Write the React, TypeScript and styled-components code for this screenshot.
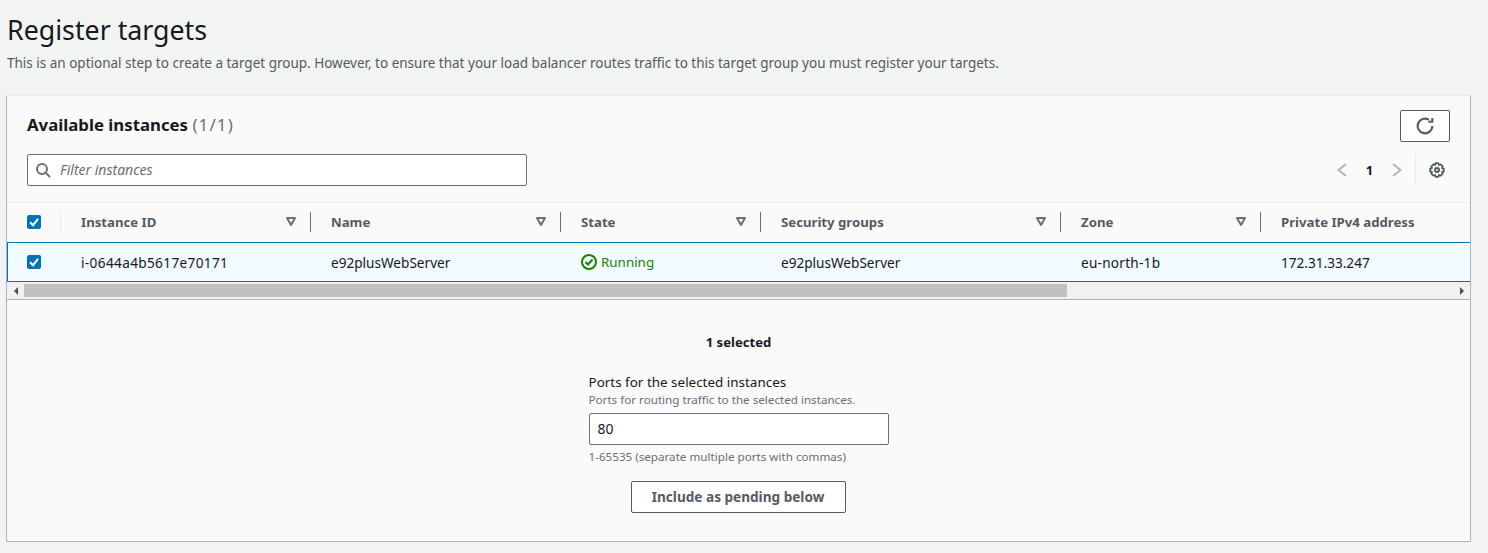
import React from "react";
import styled, { createGlobalStyle } from "styled-components";

const Global = createGlobalStyle`
  html, body { margin: 0; padding: 0; background: #f2f3f3; }
  body { font-family: "Noto Sans", "Open Sans", sans-serif; font-size: 14px; color: #16191f; }
  * { box-sizing: border-box; }
`;

const Page = styled.div`
  width: 1488px;
  height: 553px;
  padding: 8px 17px 0 6px;
  overflow: hidden;
`;
const Title = styled.h1`
  margin: 0 0 2px 1px;
  font-size: 26.75px;
  line-height: 44px;
  font-weight: 400;
  color: #16191f;
`;
const Description = styled.p`
  margin: 0 0 23px 1px;
  font-size: 13.5px;
  line-height: 18px;
  color: #545b64;
`;
const Panel = styled.section`
  height: 447px;
  background: #fafafa;
  border-left: 1px solid #aab7b8;
  border-right: 1px solid #aab7b8;
  border-bottom: 1px solid #aab7b8;
  border-top: 1px solid #eaeded;
`;
const PanelHeader = styled.div`
  height: 106px;
  padding: 14px 20px 0 20px;
  display: flex;
  justify-content: space-between;
`;
const HeaderLeft = styled.div`
  display: flex;
  flex-direction: column;
  gap: 15px;
`;
const PanelTitle = styled.h2`
  margin: 0;
  height: 29px;
  padding-top: 1px;
  font-size: 16.8px;
  line-height: 28px;
  font-weight: 700;
  color: #16191f;
  span { font-weight: 400; font-size: 17px; letter-spacing: 1.1px; color: #687078; }
`;
const Search = styled.div`
  width: 500px;
  height: 32px;
  background: #fff;
  border: 1px solid #687078;
  border-radius: 2px;
  display: flex;
  align-items: center;
  gap: 9px;
  padding: 0 0 1px 7px;
  font-size: 14px;
  font-style: italic;
  color: #687078;
`;
const HeaderRight = styled.div`
  display: flex;
  flex-direction: column;
  align-items: flex-end;
  gap: 12px;
`;
const IconButton = styled.div`
  width: 50px;
  height: 32px;
  background: #fff;
  border: 1px solid #545b64;
  border-radius: 2px;
  display: flex;
  align-items: center;
  justify-content: center;
  color: #545b64;
`;
const Pager = styled.div`
  display: flex;
  align-items: center;
  height: 32px;
  margin-right: 5px;
`;
const PageNumber = styled.span`
  width: 45px;
  text-align: center;
  font-size: 13px;
  font-weight: 700;
`;
const PagerDivider = styled.div`
  width: 1px;
  height: 32px;
  margin: 0 13px;
  background: #eaeded;
`;
const Row = styled.div<{ $selected?: boolean }>`
  display: grid;
  grid-template-columns: 54px 250px 250px 200px 300px 200px 1fr;
  height: 40px;
  padding-bottom: ${(p) => (p.$selected ? "0" : "2px")};
  align-items: center;
  font-size: 13.6px;
  background: ${(p) => (p.$selected ? "#f1faff" : "#fafafa")};
  border-top: 1px solid ${(p) => (p.$selected ? "#0073bb" : "#eaeded")};
  border-bottom: ${(p) => (p.$selected ? "1px solid #0073bb" : "none")};
  box-shadow: ${(p) => (p.$selected ? "inset 1px 0 0 #0073bb" : "none")};
  color: #16191f;
`;
const CheckCell = styled.div<{ $divider?: boolean }>`
  height: 20px;
  padding-left: 20px;
  display: flex;
  align-items: center;
  border-right: ${(p) => (p.$divider ? "1px solid #eaeded" : "none")};
`;
const Check = styled.div`
  width: 14px;
  height: 14px;
  border-radius: 2px;
  background: #0073bb;
  display: flex;
  align-items: center;
  justify-content: center;
`;
const HeadCell = styled.div<{ $last?: boolean }>`
  height: 20px;
  padding: 0 14px 0 20px;
  display: flex;
  align-items: center;
  justify-content: space-between;
  font-size: 13.2px;
  font-weight: 700;
  color: #545b64;
  border-right: ${(p) => (p.$last ? "none" : "1px solid #687078")};
`;
const Cell = styled.div<{ $tracking?: number }>`
  padding-left: 20px;
  display: flex;
  align-items: center;
  gap: 4px;
  letter-spacing: ${(p) => p.$tracking ?? 0}px;
`;
const Running = styled.span`
  color: #1d8102;
  font-size: 13.4px;
`;
const Scrollbar = styled.div`
  height: 17px;
  background: #f1f1f1;
  display: flex;
  align-items: center;
  border-bottom: 1px solid #aab7b8;
  box-sizing: content-box;
`;
const ScrollArrow = styled.div<{ $right?: boolean }>`
  width: 17px;
  height: 17px;
  display: flex;
  align-items: center;
  justify-content: center;
  color: #505050;
  margin-left: ${(p) => (p.$right ? "auto" : "0")};
`;
const ScrollThumb = styled.div`
  width: 1043px;
  height: 13px;
  background: #c1c1c1;
`;
const Selection = styled.div`
  display: flex;
  flex-direction: column;
  align-items: center;
  padding-top: 32px;
`;
const SelectedCount = styled.div`
  font-size: 13.1px;
  line-height: 20px;
  font-weight: 700;
  margin-bottom: 20px;
`;
const Field = styled.div`
  width: 300px;
  display: flex;
  flex-direction: column;
`;
const Label = styled.div`
  font-size: 13.45px;
  line-height: 20px;
  color: #16191f;
`;
const Hint = styled.div`
  font-size: 11.65px;
  line-height: 16px;
  color: #687078;
`;
const PortInput = styled.div`
  height: 32px;
  margin: 5px 0 4px;
  padding: 0 0 2px 8px;
  background: #fff;
  border: 1px solid #687078;
  border-radius: 2px;
  display: flex;
  align-items: center;
  font-size: 14px;
`;
const PendingButton = styled.div`
  width: 215px;
  height: 32px;
  margin: 16px 1px 0 0;
  padding-bottom: 2px;
  background: #fff;
  border: 1px solid #545b64;
  border-radius: 2px;
  display: flex;
  align-items: center;
  justify-content: center;
  font-size: 13.6px;
  font-weight: 700;
  color: #545b64;
`;

const CheckMark = () => (
  <Check>
    <svg width="12" height="12" viewBox="0 0 12 12" fill="none">
      <path d="M2 6.2 L5 9.2 L10 2.8" stroke="#fff" strokeWidth="2" />
    </svg>
  </Check>
);

const Caret = () => (
  <svg width="10" height="9" viewBox="0 0 10 9" fill="none">
    <path d="M1 1 H9 L5 8 Z" stroke="#687078" strokeWidth="2" strokeLinejoin="round" />
  </svg>
);

const SearchIcon = () => (
  <svg width="16" height="16" viewBox="0 0 16 16" fill="none" stroke="#687078" strokeWidth="2">
    <circle cx="7" cy="7" r="5" />
    <path d="M10.6 10.6 L15 15" />
  </svg>
);

const Refresh = () => (
  <svg width="18" height="18" viewBox="0 0 16 16" fill="none" stroke="#545b64" strokeWidth="1.9">
    <path d="M14.5 8 A6.5 6.5 0 1 1 11.5 2.5" />
    <path d="M14.5 0.8 V4.2 H11" />
  </svg>
);

const Chevron = ({ flip }: { flip?: boolean }) => (
  <svg width="10" height="14" viewBox="0 0 10 14" fill="none" stroke="#aab7b8" strokeWidth="2">
    <path d={flip ? "M1 1 L8.5 7 L1 13" : "M9 1 L1.5 7 L9 13"} />
  </svg>
);

const Gear = () => (
  <svg width="16" height="16" viewBox="0 0 16 16" fill="none" stroke="#545b64" strokeWidth="2">
    <circle cx="8" cy="8" r="2" />
    <path d="M6.6 1.2 H9.4 L9.9 3 L11.6 2.3 L13.7 4.4 L13 6.1 L14.8 6.6 V9.4 L13 9.9 L13.7 11.6 L11.6 13.7 L9.9 13 L9.4 14.8 H6.6 L6.1 13 L4.4 13.7 L2.3 11.6 L3 9.9 L1.2 9.4 V6.6 L3 6.1 L2.3 4.4 L4.4 2.3 L6.1 3 Z" strokeWidth="1.8" strokeLinejoin="round" />
  </svg>
);

const StatusOk = () => (
  <svg width="16" height="16" viewBox="0 0 16 16" fill="none" stroke="#1d8102" strokeWidth="2">
    <circle cx="8" cy="8" r="7" />
    <path d="M4.5 8 L7 10.5 L11.5 5.5" />
  </svg>
);

const columns = ["Instance ID", "Name", "State", "Security groups", "Zone"];

export default function App() {
  return (
    <Page>
      <Global />
      <Title>Register targets</Title>
      <Description>
        This is an optional step to create a target group. However, to ensure that your load balancer routes traffic to this target group you must register your targets.
      </Description>
      <Panel>
        <PanelHeader>
          <HeaderLeft>
            <PanelTitle>
              Available instances <span>(1/1)</span>
            </PanelTitle>
            <Search>
              <SearchIcon />
              Filter instances
            </Search>
          </HeaderLeft>
          <HeaderRight>
            <IconButton>
              <Refresh />
            </IconButton>
            <Pager>
              <Chevron />
              <PageNumber>1</PageNumber>
              <Chevron flip />
              <PagerDivider />
              <Gear />
            </Pager>
          </HeaderRight>
        </PanelHeader>
        <Row>
          <CheckCell $divider>
            <CheckMark />
          </CheckCell>
          {columns.map((c) => (
            <HeadCell key={c}>
              {c}
              <Caret />
            </HeadCell>
          ))}
          <HeadCell $last>Private IPv4 address</HeadCell>
        </Row>
        <Row $selected>
          <CheckCell>
            <CheckMark />
          </CheckCell>
          <Cell $tracking={0.36}>i-0644a4b5617e70171</Cell>
          <Cell>e92plusWebServer</Cell>
          <Cell>
            <StatusOk />
            <Running>Running</Running>
          </Cell>
          <Cell>e92plusWebServer</Cell>
          <Cell $tracking={0.25}>eu-north-1b</Cell>
          <Cell>172.31.33.247</Cell>
        </Row>
        <Scrollbar>
          <ScrollArrow>
            <svg width="6" height="8" viewBox="0 0 6 8"><path d="M5 0 V8 L1 4 Z" fill="currentColor" /></svg>
          </ScrollArrow>
          <ScrollThumb />
          <ScrollArrow $right>
            <svg width="6" height="8" viewBox="0 0 6 8"><path d="M1 0 V8 L5 4 Z" fill="currentColor" /></svg>
          </ScrollArrow>
        </Scrollbar>
        <Selection>
          <SelectedCount>1 selected</SelectedCount>
          <Field>
            <Label>Ports for the selected instances</Label>
            <Hint>Ports for routing traffic to the selected instances.</Hint>
            <PortInput>80</PortInput>
            <Hint>1-65535 (separate multiple ports with commas)</Hint>
          </Field>
          <PendingButton>Include as pending below</PendingButton>
        </Selection>
      </Panel>
    </Page>
  );
}
